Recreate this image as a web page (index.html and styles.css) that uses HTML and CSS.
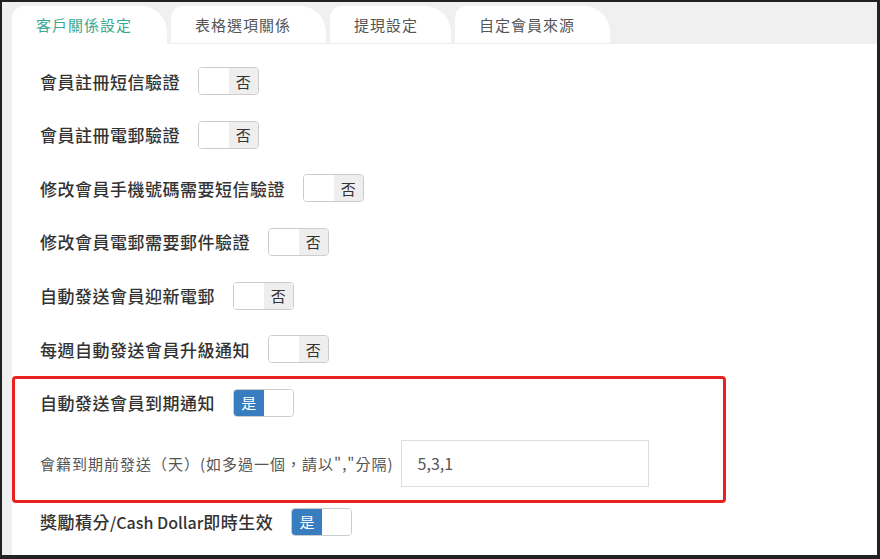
FILE: index.html
```html
<!DOCTYPE html>
<html lang="zh-Hant">
<head>
<meta charset="utf-8">
<title>客戶關係設定</title>
<link rel="stylesheet" href="styles.css">
</head>
<body>
<div class="frame">
  <div class="tabs">
    <div class="tab active w155">客戶關係設定</div>
    <div class="tab w155">表格選項關係</div>
    <div class="tab w121">提現設定</div>
    <div class="tab w155">自定會員來源</div>
  </div>
  <div class="panel">
    <div class="row"><span class="label">會員註冊短信驗證</span><span class="toggle"><span class="half blank"></span><span class="half off">否</span></span></div>
    <div class="row"><span class="label">會員註冊電郵驗證</span><span class="toggle"><span class="half blank"></span><span class="half off">否</span></span></div>
    <div class="row"><span class="label">修改會員手機號碼需要短信驗證</span><span class="toggle"><span class="half blank"></span><span class="half off">否</span></span></div>
    <div class="row"><span class="label">修改會員電郵需要郵件驗證</span><span class="toggle"><span class="half blank"></span><span class="half off">否</span></span></div>
    <div class="row"><span class="label">自動發送會員迎新電郵</span><span class="toggle"><span class="half blank"></span><span class="half off">否</span></span></div>
    <div class="row"><span class="label">每週自動發送會員升級通知</span><span class="toggle"><span class="half blank"></span><span class="half off">否</span></span></div>
    <div class="row"><span class="label">自動發送會員到期通知</span><span class="toggle"><span class="half on">是</span><span class="half blank"></span></span></div>
    <div class="row sub"><span class="sublabel">會籍到期前發送（天）(如多過一個，請以","分隔)</span><span class="input">5,3,1</span></div>
    <div class="row after"><span class="label">獎勵積分<span class="latin">/Cash Dollar</span>即時生效</span><span class="toggle"><span class="half on">是</span><span class="half blank"></span></span></div>
    <div class="annot"></div>
  </div>
</div>
</body>
</html>
```
FILE: styles.css
```css
html, body {
  margin: 0;
  padding: 0;
}
body {
  font-family: "Noto Sans CJK TC", "Noto Sans", sans-serif;
  background: #222;
}
.frame {
  width: 880px;
  height: 559px;
  box-sizing: border-box;
  border-style: solid;
  border-color: #222;
  border-width: 2px 3px 4px 2px;
  background: #f0f0f0;
  padding-left: 10px;
  display: flex;
  flex-direction: column;
  overflow: hidden;
}
.tabs {
  height: 42px;
  flex: none;
  display: flex;
  align-items: flex-end;
  gap: 4px;
}
.tab {
  height: 38px;
  line-height: 38px;
  box-sizing: border-box;
  padding-left: 24px;
  background: #fff;
  border-radius: 12px 26px 0 0;
  font-size: 15px;
  letter-spacing: 1px;
  color: #555;
  box-shadow: inset 0 -1px 0 #ececec;
}
.tab.active {
  color: #3aa98f;
  box-shadow: none;
}
.w155 { width: 155px; }
.w121 { width: 121px; }
.panel {
  flex: 1;
  background: #fff;
  padding: 23px 0 0 28px;
  position: relative;
  display: flex;
  flex-direction: column;
}
.row {
  display: flex;
  align-items: center;
  height: 28px;
  margin-top: 25.67px;
}
.row:first-child {
  margin-top: 0;
}
.row.sub {
  height: 47px;
  margin-top: 23px;
}
.row.after {
  margin-top: 21px;
}
.label {
  font-size: 17px;
  font-weight: 500;
  letter-spacing: 0.5px;
  color: #333;
  margin-right: 18px;
}
.latin {
  font-size: 16px;
  letter-spacing: 0;
}
.sublabel {
  font-size: 15px;
  letter-spacing: 1px;
  color: #555;
  margin-right: 7px;
}
.toggle {
  display: flex;
  width: 61px;
  height: 28px;
  box-sizing: border-box;
  border: 1px solid #ccc;
  border-radius: 4px;
  overflow: hidden;
}
.half {
  width: 50%;
  display: flex;
  align-items: center;
  justify-content: center;
  font-size: 15px;
}
.blank { background: #fff; }
.off { background: #eee; color: #333; }
.on { background: #377dbf; color: #fff; }
.input {
  width: 248px;
  height: 47px;
  box-sizing: border-box;
  border: 1px solid #ddd;
  padding-left: 16px;
  display: flex;
  align-items: center;
  font-size: 16px;
  color: #555;
}
.annot {
  position: absolute;
  left: 0;
  top: 332px;
  width: 714px;
  height: 127px;
  box-sizing: border-box;
  border: 3px solid #e8231f;
  border-radius: 4px;
}
```
